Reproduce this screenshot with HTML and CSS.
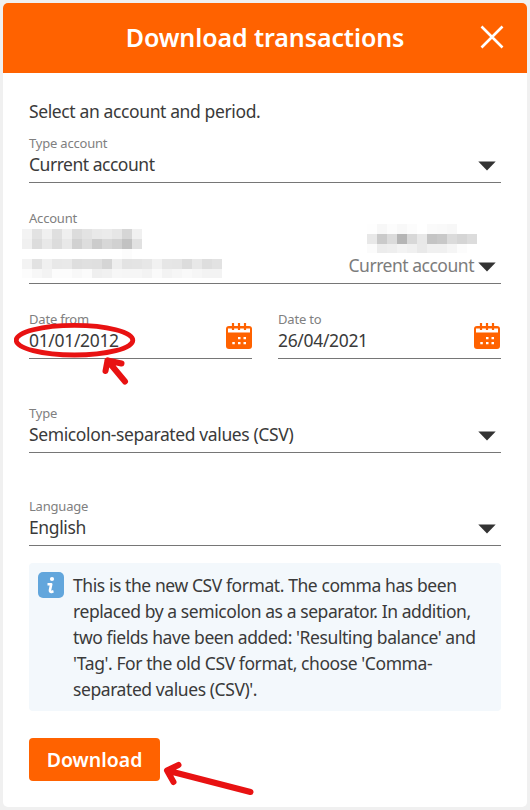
FILE: index.html
```html
<!DOCTYPE html>
<html lang="en">
<head>
<meta charset="utf-8">
<title>Download transactions</title>
<link rel="stylesheet" href="styles.css">
</head>
<body>
<main class="dialog">
  <header class="header">
    <h1 class="title">Download transactions</h1>
    <svg class="close" width="24" height="24" viewBox="0 0 24 24"><path d="M1.5 1.5l21 21M22.5 1.5l-21 21" fill="none" stroke="#fff" stroke-width="2.6"/></svg>
  </header>
  <div class="content">
    <p class="intro">Select an account and period.</p>

    <div class="field">
      <span class="label">Type account</span>
      <div class="row"><span class="value current">Current account</span><svg class="caret" width="18" height="10" viewBox="0 0 18 10"><path d="M.3 .6h17.4L9 9.6z" fill="#333"/></svg></div>
    </div>

    <div class="field account">
      <span class="label">Account</span>
      <div class="row"><span class="value muted">Current account</span><svg class="caret" width="18" height="10" viewBox="0 0 18 10"><path d="M.3 .6h17.4L9 9.6z" fill="#333"/></svg></div>
      <svg class="mosaic" id="mosaic" width="460" height="56" viewBox="0 0 460 56" shape-rendering="crispEdges"></svg>
    </div>

    <div class="dates">
      <div class="field">
        <span class="label">Date from</span>
        <div class="row"><span class="value date">01/01/2012</span></div>
        <svg class="calendar" width="26" height="26" viewBox="0 0 26 26"><use href="#cal"/></svg>
        <svg class="mark circle" width="124" height="64" viewBox="0 0 124 64"><ellipse cx="60.5" cy="18.2" rx="58.3" ry="14.800" fill="none" stroke="#e81212" stroke-width="4.800"/><path d="M111 59.500L93.500 38.500M107.500 41.500L93.500 38.500L91.500 49" fill="none" stroke="#e81212" stroke-width="6" stroke-linecap="round" stroke-linejoin="round"/></svg>
      </div>
      <div class="field">
        <span class="label">Date to</span>
        <div class="row"><span class="value date">26/04/2021</span></div>
        <svg class="calendar calendar-to" width="26" height="26" viewBox="0 0 26 26">
          <g id="cal"><rect y="3" width="26" height="23" rx="3" fill="#ff6200"/><path d="M2 5.500h22v4H2z" fill="#fff"/><path d="M7 0v7M13 0v7M19 0v7" stroke="#ff6200" stroke-width="2.200"/><path d="M12 14h2.500v2.300H12zM17.500 14H20v2.300h-2.500zM6.300 19h2.500v2.300H6.300zM12 19h2.500v2.300H12zM17.500 19H20v2.300h-2.500z" fill="#fff"/></g>
        </svg>
      </div>
    </div>

    <div class="field type">
      <span class="label">Type</span>
      <div class="row"><span class="value">Semicolon-separated values (CSV)</span><svg class="caret" width="18" height="10" viewBox="0 0 18 10"><path d="M.3 .6h17.4L9 9.6z" fill="#333"/></svg></div>
    </div>

    <div class="field language">
      <span class="label">Language</span>
      <div class="row"><span class="value">English</span><svg class="caret" width="18" height="10" viewBox="0 0 18 10"><path d="M.3 .6h17.4L9 9.6z" fill="#333"/></svg></div>
    </div>

    <div class="info">
      <svg class="info-icon" width="26" height="26" viewBox="0 0 26 26"><rect width="26" height="26" rx="5" fill="#62a6dc"/><circle cx="14" cy="7" r="2.100" fill="#fff"/><path d="M9.500 12.200H13.200L12 18Q11.700 20.100 13.500 19.900L15.500 19.300" fill="none" stroke="#fff" stroke-width="2.600" stroke-linejoin="round"/></svg>
      <p class="info-text">This is the new CSV format. The comma has been<br>replaced by a semicolon as a separator. In addition,<br>two fields have been added: 'Resulting balance' and<br>'Tag'. For the old CSV format, choose 'Comma-<br>separated values (CSV)'.</p>
    </div>

    <div class="actions">
      <button class="download">Download</button>
      <svg class="mark arrow" width="94" height="40" viewBox="0 0 94 40"><path d="M88.500 32L5 10.500L16.500 5M5 10.500L11.500 22" fill="none" stroke="#e81212" stroke-width="6" stroke-linecap="round" stroke-linejoin="round"/></svg>
    </div>
  </div>
</main>
<script src="mosaic.js"></script>
</body>
</html>
```
FILE: styles.css
```css
* { box-sizing: border-box; }
body {
  margin: 0;
  padding: 3px;
  background: #f0f0f0;
  color: #3a3a3a;
  font-family: "Noto Sans", sans-serif;
}
.dialog {
  width: 524px;
  height: 804px;
  background: #fff;
  border-radius: 5px;
  overflow: hidden;
}
.header {
  display: flex;
  align-items: center;
  justify-content: flex-end;
  height: 70px;
  padding-right: 23px;
  background: #ff6200;
}
.title {
  flex: 1;
  margin: 0 0 2px;
  padding-left: 47px;
  text-align: center;
  color: #fff;
  font-size: 25px;
  line-height: 34px;
  font-weight: 600;
  letter-spacing: -0.1px;
}
.close { margin-bottom: 2px; }
.content { padding: 26px 26px 0; }
.intro {
  margin: 0 0 10px;
  font-size: 17.5px;
  line-height: 24px;
  letter-spacing: -0.38px;
}
.field {
  position: relative;
  height: 50px;
  border-bottom: 1px solid #767676;
}
.label {
  display: block;
  font-size: 13px;
  line-height: 20px;
  letter-spacing: -0.2px;
  color: #808080;
}
.row {
  display: flex;
  align-items: center;
  justify-content: space-between;
  height: 24px;
  padding-right: 5px;
}
.value {
  margin-bottom: 2px;
  font-size: 17.5px;
  line-height: 24px;
  letter-spacing: -0.38px;
  white-space: nowrap;
}
.current, .muted { letter-spacing: -0.48px; }
.muted { color: #7c7c7c; }
.date { letter-spacing: -0.33px; }
.caret { margin-top: 2px; }
.account {
  height: 76px;
  margin-top: 25px;
}
.account .row {
  justify-content: flex-end;
  gap: 4px;
  margin-top: 26px;
}
.mosaic {
  position: absolute;
  left: -7px;
  top: 16px;
}
.dates {
  display: grid;
  grid-template-columns: 223px 223px;
  gap: 26px;
  margin-top: 25px;
}
.calendar {
  position: absolute;
  right: 0;
  top: 14px;
}
.calendar-to { right: 1px; }
.type { margin-top: 44px; }
.language { margin-top: 43px; }
.info {
  display: flex;
  gap: 9px;
  height: 148px;
  margin-top: 17px;
  padding: 9px;
  border-radius: 4px;
  background: #f3f8fc;
}
.info-icon { flex: none; }
.info-text {
  margin: -0.5px 0 0;
  font-size: 17.5px;
  line-height: 26.2px;
  letter-spacing: -0.42px;
  white-space: nowrap;
}
.actions {
  position: relative;
  margin-top: 27px;
}
.download {
  display: block;
  width: 131px;
  height: 43px;
  padding: 0;
  border: 0;
  border-radius: 4px;
  background: #ff6200;
  color: #fff;
  font: 600 19.5px/43px "Noto Sans", sans-serif;
  letter-spacing: 0;
}
.mark { position: absolute; }
.circle { left: -15px; top: 13px; }
.arrow { left: 133px; top: 22px; }
```
FILE: mosaic.js
```javascript
// Pixelated placeholders: [x, y, height, grey level of each 10px cell]
const rows = [
  [0, 5, 10, [243, 226, 240, 223, 239, 220, 227, 233, 235, 230, 214, 240]],
  [0, 15, 10, [240, 220, 232, 220, 232, 209, 221, 204, 215, 209, 194, 225]],
  [100, 25, 10, [252]],
  [0, 35, 10, [243, 226, 240, 232, 233, 222, 224, 223, 213, 238, 227, 228, 231, 241, 230, 229, 220, 232, 222, 226]],
  [0, 45, 9, [252, 247, 243, 252, 252, 248, 251, 239, 241, 247, 246, 246, 243, 250, 243, 246, 249, 246, 243, 243]],
  [345, 0, 10, [254, 247, 252, 248, 252, 255, 250, 249, 247, 255, 255]],
  [345, 10, 10, [232, 202, 219, 181, 216, 232, 196, 200, 219, 213, 220]],
  [345, 20, 9, [251, 236, 238, 243, 240, 233, 240, 240, 245, 252, 255]]
];
const svg = document.getElementById("mosaic");
for (const [x, y, h, cells] of rows) {
  cells.forEach((g, i) => {
    const r = document.createElementNS("http://www.w3.org/2000/svg", "rect");
    r.setAttribute("x", x + i * 10);
    r.setAttribute("y", y);
    r.setAttribute("width", 10);
    r.setAttribute("height", h);
    r.setAttribute("fill", `rgb(${g},${g},${g})`);
    svg.appendChild(r);
  });
}
```
